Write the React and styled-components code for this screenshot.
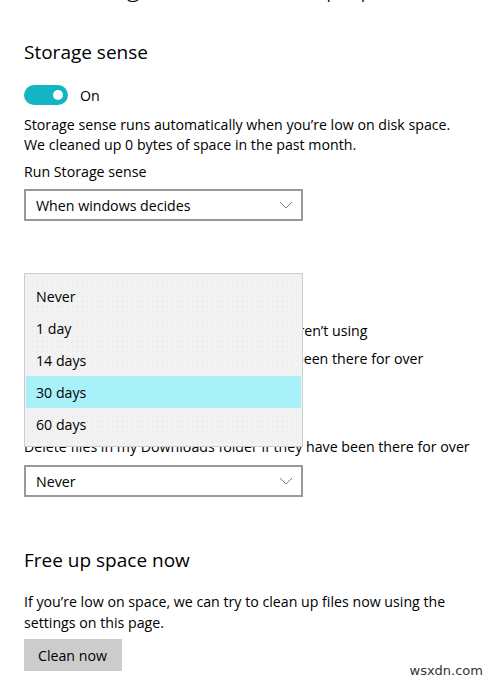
import React from "react";
import styled, { createGlobalStyle } from "styled-components";

const Global = createGlobalStyle`
  html, body { margin: 0; padding: 0; background: #fff; }
  body { font-family: "Open Sans", "Noto Sans", sans-serif; color: #000; }
`;

const Page = styled.div`
  width: 495px;
  height: 680px;
  overflow: hidden;
  position: relative;
  padding: 0 24px;
  box-sizing: border-box;
`;

const Title = styled.h1`
  margin: -31px 0 0;
  padding-left: 42px;
  font-size: 26px;
  line-height: 34px;
  font-weight: 300;
  white-space: nowrap;
`;

const Heading = styled.h2`
  margin: ${(p) => p.$top}px 0 0;
  font-size: 19px;
  line-height: 26px;
  font-weight: 400;
`;

const ToggleRow = styled.div`
  display: flex;
  align-items: center;
  gap: 12px;
  margin-top: 20px;
  font-size: 14.2px;
`;

const Toggle = styled.div`
  width: 44px;
  height: 20px;
  border-radius: 10px;
  background: #13b4c4;
  display: flex;
  align-items: center;
  justify-content: flex-end;
  padding: 0 5px;
  box-sizing: border-box;
`;

const Knob = styled.div`
  width: 10px;
  height: 10px;
  border-radius: 50%;
  background: #fff;
`;

const Text = styled.p`
  margin: ${(p) => p.$top || 0}px 0 0;
  font-size: 14.2px;
  line-height: ${(p) => p.$lh || 20}px;
  white-space: nowrap;
`;

const SelectWrap = styled.div`
  position: relative;
  margin-top: ${(p) => p.$top || 0}px;
  width: 279px;
`;

const Select = styled.div`
  height: 32px;
  border: 2px solid #999;
  box-sizing: border-box;
  display: flex;
  align-items: center;
  justify-content: space-between;
  padding: 0 8px 0 10px;
  font-size: 14.2px;
`;

const Chevron = () => (
  <svg width="14" height="8" viewBox="0 0 14 8" fill="none">
    <path d="M1 1l6 6 6-6" stroke="#808080" strokeWidth="1" />
  </svg>
);

const CheckRow = styled.div`
  display: flex;
  align-items: center;
  gap: 8px;
  margin-top: ${(p) => p.$top || 0}px;
  font-size: 14.2px;
  line-height: 20px;
  white-space: nowrap;
`;

const Box = styled.div`
  width: 18px;
  height: 18px;
  background: #13b4c4;
`;

const Popup = styled.ul`
  position: absolute;
  left: 0;
  top: -104px;
  width: 279px;
  box-sizing: border-box;
  margin: 0;
  padding: 6px 1px;
  list-style: none;
  background-color: #f2f2f2;
  background-image: radial-gradient(#e4e4e4 0.6px, transparent 0.8px);
  background-size: 5px 5px;
  border: 1px solid #cccccc;
  z-index: 2;
`;

const Item = styled.li`
  height: 32px;
  display: flex;
  align-items: center;
  padding-left: 10px;
  font-size: 14.2px;
  background: ${(p) => (p.$active ? "#a9f1f9" : "transparent")};
`;

const Button = styled.button`
  margin-top: 6px;
  width: 98px;
  height: 32px;
  border: none;
  background: #cccccc;
  font-family: inherit;
  font-size: 14.2px;
  color: #000;
  text-align: left;
  padding: 0 0 0 14px;
`;

const Watermark = styled.div`
  position: absolute;
  right: 12px;
  bottom: 2px;
  font-size: 13px;
  color: #333;
  font-family: "DejaVu Sans", sans-serif;
`;

export default function App() {
  return (
    <>
      <Global />
      <Page>
        <Title>Change how we free up space</Title>
        <Heading $top={36}>Storage sense</Heading>
        <ToggleRow>
          <Toggle><Knob /></Toggle>
          <span>On</span>
        </ToggleRow>
        <Text $top={10}>
          Storage sense runs automatically when you’re low on disk space.
          <br />
          We cleaned up 0 bytes of space in the past month.
        </Text>
        <Text $top={7}>Run Storage sense</Text>
        <SelectWrap $top={7}>
          <Select>When windows decides<Chevron /></Select>
        </SelectWrap>
        <Heading $top={54}>Temporary Files</Heading>
        <CheckRow $top={20}>
          <Box />
          Delete temporary files that my apps aren’t using
        </CheckRow>
        <Text $top={8}>Delete files in my recycle bin if they have been there for over</Text>
        <SelectWrap $top={8}>
          <Select>30 days<Chevron /></Select>
          <Popup>
            <Item>Never</Item>
            <Item>1 day</Item>
            <Item>14 days</Item>
            <Item $active>30 days</Item>
            <Item>60 days</Item>
          </Popup>
        </SelectWrap>
        <Text $top={28}>Delete files in my Downloads folder if they have been there for over</Text>
        <SelectWrap $top={8}>
          <Select>Never<Chevron /></Select>
        </SelectWrap>
        <Heading $top={50}>Free up space now</Heading>
        <Text $top={18} $lh={21}>
          If you’re low on space, we can try to clean up files now using the
          <br />
          settings on this page.
        </Text>
        <Button>Clean now</Button>
        <Watermark>wsxdn.com</Watermark>
      </Page>
    </>
  );
}
